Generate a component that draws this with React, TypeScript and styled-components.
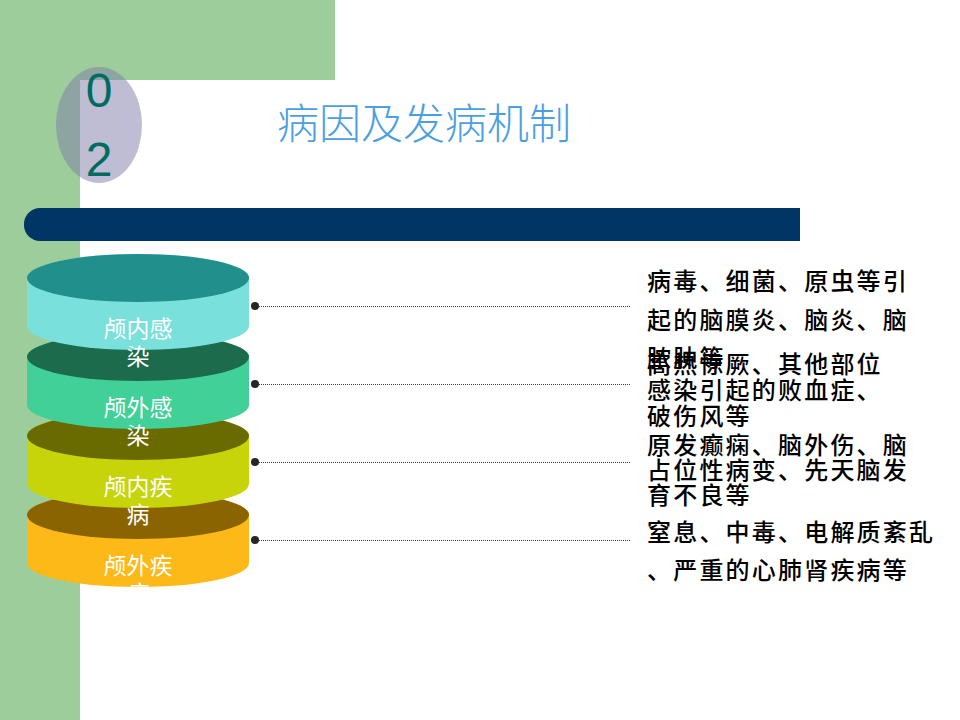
import React from "react";
import styled, { createGlobalStyle } from "styled-components";

const GlobalStyle = createGlobalStyle`
	html, body {
		margin: 0;
		padding: 0;
		background: #ffffff;
	}
	#root {
		width: 960px;
		height: 720px;
	}
`;

const GREEN = "#9ccd9a";

const Page = styled.div`
	width: 960px;
	height: 720px;
	overflow: hidden;
	display: flex;
	flex-direction: column;
	background:
		linear-gradient(${GREEN}, ${GREEN}) 0 0 / 80px 100% no-repeat,
		linear-gradient(${GREEN}, ${GREEN}) 0 0 / 335px 80px no-repeat,
		#ffffff;
`;

const Header = styled.div`
	display: flex;
	align-items: flex-start;
	padding: 67px 0 0 56px;
`;

const Badge = styled.div`
	flex: none;
	width: 86px;
	height: 116px;
	border-radius: 50%;
	background: rgba(125, 123, 169, 0.5);
	display: flex;
	align-items: center;
	justify-content: center;
`;

const Digits = styled.div`
	width: 28px;
	font-family: "Liberation Sans", Arial, sans-serif;
	font-size: 48px;
	line-height: 69px;
	color: #006b60;
	text-align: center;
	word-break: break-all;
`;

const Title = styled.h1`
	margin: 33px 0 0 135px;
	font-family: "Noto Sans CJK SC", sans-serif;
	font-weight: 300;
	font-size: 42px;
	line-height: 42px;
	color: #4b9fe1;
	white-space: nowrap;
`;

const Bar = styled.div`
	margin: 25px 0 0 24px;
	width: 776px;
	height: 33px;
	border-radius: 16px 0 0 16px;
	background: #003566;
`;

const Content = styled.div`
	display: flex;
	align-items: flex-start;
	margin: 13px 0 0 27px;
`;

const Stack = styled.div`
	flex: none;
	width: 222px;
	display: flex;
	flex-direction: column;
	overflow: hidden;
`;

const Cylinder = styled.div<{ $side: string; $top: string; $layer: number }>`
	position: relative;
	z-index: ${(p) => p.$layer};
	flex: none;
	width: 222px;
	height: 96px;
	margin-top: -17px;
	border-radius: 111px / 24px;
	background: ${(p) => p.$side};
	display: flex;
	flex-direction: column;
	align-items: center;
	padding-top: 59px;
	box-sizing: border-box;

	&:first-child {
		margin-top: 0;
	}

	&::before {
		content: "";
		position: absolute;
		left: 0;
		top: 0;
		width: 100%;
		height: 48px;
		border-radius: 50%;
		background: ${(p) => p.$top};
	}
`;

const CylLabel = styled.div`
	position: relative;
	width: 72px;
	font-family: "Noto Sans CJK SC", sans-serif;
	font-size: 23px;
	line-height: 28px;
	color: #ffffff;
	text-align: center;
`;

const Rows = styled.div`
	margin: 13px 0 0 2px;
	display: grid;
	grid-template-columns: 8px 371px 1fr;
	grid-auto-rows: 78px;
	align-items: center;
`;

const Dot = styled.span`
	width: 8px;
	height: 8px;
	border-radius: 50%;
	background: #262626;
`;

const Leader = styled.span`
	height: 0;
	border-top: 1px dotted #3a3a3a;
`;

const Note = styled.div<{ $lh: number; $shift: number }>`
	margin: ${(p) => p.$shift * 2}px 0 0 17px;
	font-family: "Noto Sans CJK SC", sans-serif;
	font-weight: 500;
	font-size: 24px;
	letter-spacing: 2.2px;
	line-height: ${(p) => p.$lh}px;
	color: #000000;
	white-space: nowrap;
`;

const NoteLine = styled.div``;

const layers = [
	{ label: "颅内感染", top: "#218f8b", side: "#7ae0dc" },
	{ label: "颅外感染", top: "#1c6b4d", side: "#40d098" },
	{ label: "颅内疾病", top: "#696b00", side: "#c8d40a" },
	{ label: "颅外疾病", top: "#8a6400", side: "#fdb918" },
];

const notes = [
	{ lh: 38.5, shift: 13, lines: ["病毒、细菌、原虫等引", "起的脑膜炎、脑炎、脑", "脓肿等"] },
	{ lh: 26, shift: 5, lines: ["高热惊厥、其他部位", "感染引起的败血症、", "破伤风等"] },
	{ lh: 25, shift: 6, lines: ["原发癫痫、脑外伤、脑", "占位性病变、先天脑发", "育不良等"] },
	{ lh: 38, shift: 10, lines: ["窒息、中毒、电解质紊乱", "、严重的心肺肾疾病等"] },
];

const App = () => {
	return (
		<>
			<GlobalStyle />
			<Page>
				<Header>
					<Badge>
						<Digits>02</Digits>
					</Badge>
					<Title>病因及发病机制</Title>
				</Header>
				<Bar />
				<Content>
					<Stack>
						{layers.map((l, i) => (
							<Cylinder key={l.label} $side={l.side} $top={l.top} $layer={layers.length - i}>
								<CylLabel>{l.label}</CylLabel>
							</Cylinder>
						))}
					</Stack>
					<Rows>
						{notes.map((n, i) => (
							<React.Fragment key={i}>
								<Dot />
								<Leader />
								<Note $lh={n.lh} $shift={n.shift}>
									{n.lines.map((line) => (
										<NoteLine key={line}>{line}</NoteLine>
									))}
								</Note>
							</React.Fragment>
						))}
					</Rows>
				</Content>
			</Page>
		</>
	);
};

export default App;
